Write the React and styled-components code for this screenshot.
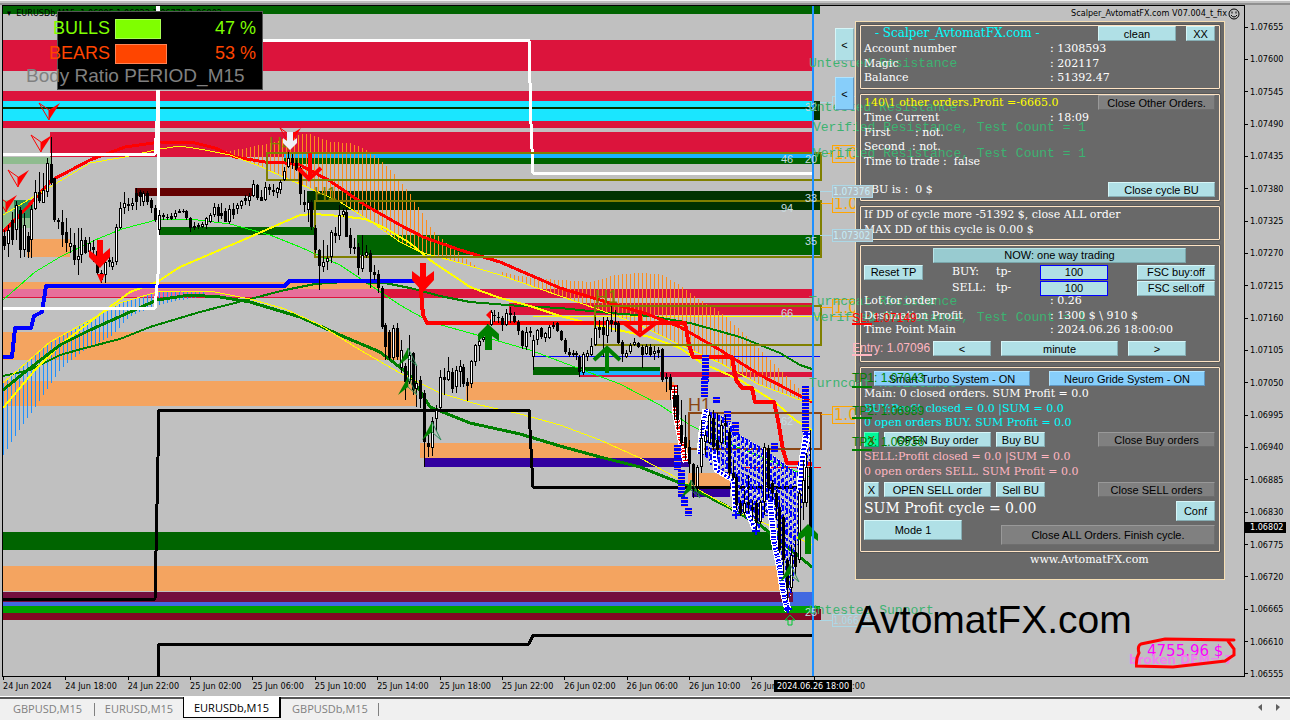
import React from "react";
import styled, { createGlobalStyle, css } from "styled-components";

const SANS = `"Liberation Sans", Arial, sans-serif`;
const SERIF = `"DejaVu Serif", serif`;
const MONO = `"Liberation Mono", monospace`;
const AXIS = `"DejaVu Sans Condensed", "DejaVu Sans", sans-serif`;

const GlobalStyle = createGlobalStyle`
  * { box-sizing: border-box; }
  body { margin: 0; background: #c0c0c0; font-family: ${SANS}; color: #000; }
  button, input { font: inherit; margin: 0; }
`;

/* ---------- window frame ---------- */

const Page = styled.div`
  display: flex;
  flex-direction: column;
  min-height: 100vh;
  overflow: hidden;
`;

const TopStrip = styled.div`
  height: 5px;
  background: #c0c0c0;
  border-top: 1px solid #f0f0f0;
  border-bottom: 2px solid #909090;
`;

const Workspace = styled.main`
  display: flex;
  flex: 1;
  padding-left: 2px;
`;

const Plot = styled.section`
  position: relative;
  isolation: isolate;
  flex: 1;
  min-width: 0;
  border: 1px solid #000;
  display: flex;
  flex-direction: column;
`;

/* layers: -2 the chart, -1 panel background and zone notes, 0 panel controls and trade levels */
const Drawing = styled.svg`
  position: absolute;
  z-index: ${(p) => p.$layer};
  top: 0;
  left: 0;
  width: 1242px;
  height: 670px;
  pointer-events: none;
`;

const ChartHeader = styled.header`
  position: relative;
  display: flex;
  justify-content: space-between;
  align-items: center;
  height: 15px;
  padding: 0 4px;
  font: 9px/15px ${AXIS};
`;

const Expert = styled.span`
  display: flex;
  align-items: center;
  gap: 1px;
`;

const RatioBox = styled.aside`
  position: absolute;
  top: 5px;
  left: 54px;
  width: 206px;
  height: 79px;
  background: #000;
  border: 1px solid #555;
  font-size: 18px;
  line-height: 25px;
  padding-top: 4px;
`;

const RatioRow = styled.div`
  display: flex;
  align-items: center;
  height: 25px;
  margin-left: -12px;
  color: ${(p) => p.$color};
`;

const RatioName = styled.span`
  width: 64px;
  text-align: right;
`;

const RatioBar = styled.span`
  height: 20px;
  margin-left: 5px;
  background: ${(p) => p.$color};
  border: 1px solid #ffffff55;
  width: ${(p) => p.$width}px;
`;

const RatioValue = styled.span`
  flex: 1;
  padding-right: 6px;
  text-align: right;
`;

const RatioCaption = styled.div`
  margin-left: -32px;
  color: #808080;
  font-size: 19px;
  line-height: 20px;
  white-space: nowrap;
`;

/* ---------- expert panel ---------- */

const Side = styled.div`
  display: flex;
  flex-direction: column;
  align-self: flex-end;
  width: 390px;
  margin-right: 19px;
`;

const PanelRow = styled.div`
  display: flex;
`;

const SideTabs = styled.div`
  display: flex;
  flex: none;
  flex-direction: column;
  gap: 16px;
  padding-top: 7px;
  width: 20px;
`;

const Panel = styled.section`
  position: relative;
  flex: 1;
  min-width: 0;
  height: 559px;
  padding: 3px 4px 0 4px;
  border: 1px solid #f5deb3;
  color: #fff;
  font: 11px/14px ${SERIF};
  &::before {
    content: "";
    position: absolute;
    z-index: -1;
    inset: 0;
    background: #696969;
  }
`;

const Group = styled.div`
  margin-bottom: 5px;
  padding: ${(p) => p.$pad || "0"} 4px 0 3px;
  height: ${(p) => p.$h}px;
  border: 1px solid #ffe4c4;
  border-radius: 1px;
  box-shadow: 0 0 0 1px #585858;
`;

const Bar = styled.div`
  display: flex;
  align-items: center;
  height: ${(p) => p.$h || 15}px;
  gap: ${(p) => p.$gap || 0}px;
  margin-top: ${(p) => p.$top || 0}px;
  padding-left: ${(p) => p.$left || 0}px;
`;

const Title = styled.h1`
  flex: 1;
  margin: 0;
  padding-left: 11px;
  color: #00ffff;
  font-size: 12px;
  font-weight: normal;
  line-height: 15px;
`;

const Lines = styled.div`
  margin-top: ${(p) => p.$top || 0}px;
  color: ${(p) => p.$color || "#fff"};
  white-space: pre;
  & > * { height: 15px; line-height: 15px; }
  & > :nth-child(even) { height: 14px; }
`;

const Line = styled.div`
  display: grid;
  grid-template-columns: 186px 1fr;
  color: ${(p) => p.$color || "inherit"};
`;

const Free = styled.div`
  color: ${(p) => p.$color || "inherit"};
`;

const Grow = styled.span`
  flex: 1;
  white-space: pre;
  color: ${(p) => p.$color || "inherit"};
`;

const tones = {
  powder: css`background: #b0e0e6; border-color: #d6f6f8 #86aeb4 #86aeb4 #d6f6f8;`,
  sky: css`background: #87cefa; border-color: #b0e4ff #5f96c0 #5f96c0 #b0e4ff;`,
  teal: css`background: #98cbd0; border-color: #b8e4e8 #7aa6aa #7aa6aa #b8e4e8;`,
  grey: css`background: #808080; border-color: #999 #6e6e6e #6e6e6e #999;`,
  green: css`background: #00fa9a; border-color: #60ffc0 #00b070 #00b070 #60ffc0; color: #a03000;`,
};

const Button = styled.button`
  flex: none;
  width: ${(p) => p.$w}px;
  height: ${(p) => p.$h || 15}px;
  padding: 0;
  border: 1px solid;
  color: #000;
  font: 11px/12px ${SANS};
  white-space: nowrap;
  ${(p) => tones[p.$tone || "powder"]}
`;

const TakeProfit = styled.div`
  display: grid;
  grid-template-columns: 88px 44px 44px 97px 78px;
  grid-auto-rows: 16px;
  align-items: center;
`;

const TpInput = styled.input`
  width: 68px;
  height: 15px;
  padding: 0;
  border: 1px solid #0000ff;
  background: #b0e0e6;
  text-align: center;
  font: 11px/13px ${SANS};
`;

const Foot = styled.div`
  display: flex;
  justify-content: space-between;
`;

const FootCol = styled.div`
  display: flex;
  flex-direction: column;
  width: ${(p) => p.$w}px;
  align-items: ${(p) => p.$align};
  gap: 4px;
  padding-top: 4px;
`;

const Sum = styled.strong`
  font-size: 14px;
  font-weight: normal;
  line-height: 15px;
  white-space: nowrap;
`;

const Site = styled.a`
  display: block;
  margin-top: -4px;
  padding-left: 170px;
  color: #fff;
  text-decoration: none;
`;

const Watermark = styled.div`
  margin-top: 16px;
  padding-left: 20px;
  font-size: 39px;
  line-height: 48px;
`;

const Profit = styled.div`
  position: relative;
  align-self: flex-end;
  width: 96px;
  height: 30px;
  color: #ff00ff;
  font: 15px/14px "DejaVu Sans", sans-serif;
  padding-left: 18px;
  white-space: nowrap;
`;

const Broken = styled.div`
  margin: -6px 0 0 -18px;
  color: #ee82ee;
  font: bold 12px/16px "DejaVu Sans", sans-serif;
`;

const Lasso = styled.svg`
  position: absolute;
  left: 6px;
  top: -8px;
  width: 102px;
  height: 36px;
`;

/* ---------- axes ---------- */

const PriceAxis = styled.div`
  position: relative;
  display: flex;
  flex-direction: column;
  justify-content: space-between;
  width: 45px;
  padding: 15px 0 0;
  margin-bottom: -4px;
  font: 9px/14px ${AXIS};
`;

const Price = styled.span`
  display: flex;
  align-items: center;
  gap: 2px;
  &::before { content: ""; width: 3px; height: 1px; background: #000; }
`;

const PriceNow = styled.span`
  position: absolute;
  top: 517px;
  left: 0;
  width: 41px;
  padding-left: 5px;
  background: #000;
  color: #fff;
  line-height: 11px;
`;

const TimeAxis = styled.div`
  position: relative;
  display: flex;
  width: 873px;
  height: 20px;
  margin-left: 2px;
  font: 9px/18px ${AXIS};
`;

const Time = styled.span`
  flex: 1;
  white-space: nowrap;
  &::before { content: ""; float: left; width: 1px; height: 3px; margin-right: -1px; margin-left: 1px; background: #000; }
`;

const TimeNow = styled.span`
  position: absolute;
  left: 772px;
  top: 3px;
  width: 78px;
  background: #000;
  color: #fff;
  text-align: center;
  line-height: 12px;
`;

const TabBar = styled.nav`
  display: flex;
  align-items: flex-start;
  height: 23px;
  background: #f0f0f0;
  border-top: 2px solid #555;
  box-shadow: 0 -1px 0 #fff;
  color: #808080;
  font: 11px/19px "Open Sans", "Noto Sans", sans-serif;
`;

const Tab = styled.a`
  width: ${(p) => p.$w}px;
  text-align: center;
  color: inherit;
  text-decoration: none;
  ${(p) => p.$rule && css`
    background: linear-gradient(#808080, #808080) right 4px / 1px 13px no-repeat;
  `}
  ${(p) => p.$active && css`
    margin-top: -2px;
    padding-top: 1px;
    background: #fff;
    color: #000;
    border: solid #000;
    border-width: 0 2px 1px 1px;
  `}
`;

const Scroll = styled.svg`
  margin: 4px 7px 0 auto;
`;

/* ---------- chart data ---------- */

/* x, high, body top, body bottom, low, rising */
const candles = [
  [4,230,236,246,250,0],[8,225,230,244,257,1],[12,212,220,240,245,0],[16,201,205,230,240,1],[20,207,210,250,258,0],
  [24,213,225,250,257,1],[28,232,236,252,258,0],[31,205,209,240,258,1],[35,180,192,209,210,1],[39,172,192,201,203,0],
  [43,173,190,203,203,1],[47,158,163,192,197,1],[51,137,164,183,185,0],[54,178,178,220,222,0],[58,218,220,222,229,0],
  [62,210,222,235,247,0],[66,218,232,243,252,0],[70,228,243,247,253,1],[74,233,245,260,265,0],[78,228,256,260,275,1],
  [81,228,240,255,263,1],[85,237,240,253,254,0],[89,237,243,252,253,1],[93,240,247,250,262,0],[97,248,251,273,275,0],
  [101,270,273,280,283,0],[105,255,262,275,283,1],[109,250,260,262,267,0],[112,257,262,267,270,1],[116,224,227,262,265,1],
  [120,202,208,228,229,1],[124,192,203,208,214,1],[128,198,204,206,211,0],[132,198,203,206,210,1],[136,188,193,202,210,0],
  [140,190,192,197,206,0],[143,191,193,202,206,1],[147,191,193,202,205,0],[151,198,200,208,213,0],[155,205,208,220,222,0],
  [159,210,215,230,235,1],[163,213,215,217,220,0],[167,214,217,218,220,1],[171,213,216,219,220,0],[175,210,213,217,219,1],
  [179,209,211,213,213,1],[183,209,211,212,213,0],[186,210,211,218,220,0],[190,217,218,228,232,0],[194,222,226,228,230,1],
  [198,223,225,227,229,0],[202,222,224,227,228,1],[206,217,218,225,229,1],[210,213,215,222,223,1],[214,203,207,215,217,1],
  [218,204,207,216,222,0],[221,203,213,216,219,0],[225,208,211,222,222,0],[229,205,209,222,224,1],[233,203,209,215,219,0],
  [237,203,205,209,214,1],[241,200,201,206,209,1],[245,195,198,201,205,0],[249,193,196,201,206,1],[253,180,184,196,197,1],
  [257,184,185,198,200,0],[261,190,197,201,201,0],[265,182,187,200,201,1],[269,184,187,190,195,0],[273,184,190,192,196,0],
  [277,187,188,193,198,1],[280,180,182,190,194,1],[284,167,171,180,181,1],[288,152,158,167,168,1],[292,154,158,163,169,0],
  [296,160,163,170,171,0],[300,166,168,194,205,0],[304,190,202,205,212,0],[308,200,202,210,222,1],[311,200,202,227,230,0],
  [315,225,228,250,253,0],[319,249,250,266,290,0],[323,240,262,267,272,1],[327,245,258,262,270,1],[331,230,232,257,263,1],
  [335,227,233,236,243,0],[339,205,215,236,240,1],[343,208,211,215,217,1],[346,208,212,237,237,0],[350,228,235,248,254,0],
  [354,238,247,249,254,1],[358,243,247,268,275,0],[362,235,255,269,272,1],[366,245,252,256,258,1],[370,250,253,272,288,0],
  [374,265,272,275,280,0],[378,270,274,288,293,0],[382,286,288,327,329,0],[385,323,325,347,360,0],[389,330,332,358,360,0],
  [393,325,328,358,360,1],[397,323,328,357,360,0],[401,340,350,368,373,1],[405,363,366,382,400,0],[409,335,355,382,384,1],
  [413,352,353,390,395,0],[416,365,383,389,407,1],[420,376,380,399,408,0],[424,390,393,442,467,0],[428,435,443,447,457,0],
  [432,417,421,448,456,1],[436,405,410,419,431,1],[440,370,377,408,409,1],[444,368,377,380,395,0],[448,357,371,380,381,1],
  [452,368,372,389,393,0],[456,366,370,387,393,1],[460,360,366,372,387,1],[463,364,367,384,387,0],[467,378,382,386,401,0],
  [471,360,361,384,388,1],[475,344,345,362,366,1],[479,338,341,346,361,1],[483,333,337,340,342,1],[487,324,326,333,341,1],
  [491,310,312,325,326,1],[494,310,315,316,322,0],[498,312,317,318,323,0],[502,316,318,325,331,0],[506,309,313,325,326,1],
  [510,307,313,315,323,0],[514,312,316,322,323,0],[518,320,322,331,335,0],[522,330,331,346,349,0],[526,327,332,347,350,1],
  [530,327,331,333,337,0],[533,335,340,357,370,1],[537,329,330,340,345,1],[541,327,328,337,339,0],[545,332,333,338,342,1],
  [549,325,327,338,339,1],[553,322,325,327,329,0],[557,322,323,331,332,0],[561,330,331,340,341,0],[565,338,340,352,354,0],
  [569,348,352,355,357,0],[573,350,353,355,357,0],[576,351,353,355,360,0],[579,355,357,372,377,0],[583,352,354,373,375,1],
  [587,350,353,357,361,1],[591,338,346,355,356,1],[595,317,328,345,346,1],[599,320,327,330,338,0],[603,317,327,335,357,0],
  [607,317,320,336,343,1],[611,306,320,324,332,0],[615,310,322,325,332,0],[618,321,323,343,344,0],[622,340,342,354,362,0],
  [626,350,353,357,358,1],[630,343,345,352,354,1],[634,338,342,345,346,1],[638,342,343,347,348,0],[642,345,347,355,368,0],
  [646,344,346,354,355,1],[650,344,347,355,357,0],[654,346,351,354,360,1],[658,347,350,353,358,0],[662,348,349,380,382,0],
  [666,373,377,379,392,0],[670,374,377,390,400,0],[674,386,395,407,420,0],[677,385,395,420,430,0],[681,400,425,443,446,0],
  [685,415,437,448,460,0],[689,440,447,464,473,0],[693,463,464,485,498,0],[697,465,467,487,497,1],[701,420,438,467,473,1],
  [705,430,435,442,455,1],[709,412,415,443,444,1],[713,410,418,447,450,0],[717,413,440,450,455,0],[721,420,425,443,445,1],
  [725,415,423,426,445,0],[729,428,432,473,476,0],[733,460,473,478,480,0],[736,474,477,505,510,0],[740,500,503,513,516,0],
  [744,490,503,513,515,1],[748,475,502,505,513,0],[752,500,507,510,520,0],[756,500,503,523,530,0],[760,500,502,522,524,1],
  [764,443,447,502,515,1],[768,445,448,487,498,0],[772,480,483,493,500,0],[776,490,493,507,520,0],[779,500,507,550,553,0],
  [783,515,517,560,575,0],[787,558,560,588,600,0],[791,545,555,588,592,1],[795,540,552,567,575,0],[799,490,493,560,563,1],
  [803,460,480,503,520,1],[806,453,467,503,507,1],[810,430,467,528,533,0],
];

/* x, y, width, height, fill */
const bands = [
  [3,6,817,8,"#006400"],[3,40,810,31,"#dc143c"],[3,91,810,37,"#dc143c"],[3,101,810,20,"#1ae6ff"],[3,107,810,2,"#003200"],
  [813,101,7,19,"#003200"],[50,132,763,25,"#dc143c"],[3,157,48,7,"#8fbc8f"],[284,153,529,5,"#1ab2ff"],[284,158,529,6,"#006400"],
  [813,153,7,11,"#006400"],[3,200,30,28,"#8fbc8f"],[14,200,19,18,"#2e8b57"],[135,188,117,8,"#640000"],[159,227,156,8,"#006400"],
  [307,191,513,19,"#003200"],[357,235,463,20,"#006400"],[27,239,43,18,"#f4a460"],[3,282,377,7,"#f4a460"],[3,289,379,8,"#e76f9b"],
  [382,289,431,8,"#dc143c"],[3,297,810,1,"#dc143c"],[3,332,397,28,"#f4a460"],[3,381,413,25,"#f4a460"],[466,382,208,18,"#f4a460"],
  [420,443,268,15,"#f4a460"],[424,458,265,9,"#3200a0"],[509,303,304,12,"#dc143c"],[533,316,287,1,"#ffff00"],
  [580,372,233,5,"#dc143c"],[533,367,127,8,"#006400"],[580,371,80,4,"#1ab2ff"],[688,473,42,14,"#f4a460"],[692,489,38,8,"#3200a0"],
  [3,532,777,18,"#006400"],[3,566,780,25,"#f4a460"],[3,592,790,10,"#730e3e"],[793,592,20,10,"#4169e1"],[3,602,810,4,"#4169e1"],
  [3,606,817,7,"#00a000"],[3,613,817,7,"#820a23"],[813,609,8,11,"#820a23"],
];

const yellowTop = [[3,215],[50,187],[90,163],[125,157],[160,149],[180,146],[205,150],[230,155],[262,167],[285,178],[300,184],[340,202],[370,221],[400,242],[420,252],[460,263],[500,275],[560,296],[600,310],[640,325],[680,345],[720,363],[760,385],[800,400],[812,400]];
const yellowLow = [[3,383],[50,342],[90,320],[120,303],[157,292],[180,291],[215,292],[250,299],[285,309],[320,325],[360,350],[400,373],[440,393],[480,405],[520,414],[560,425],[600,440],[640,458],[690,485],[740,513],[785,532],[812,545]];
const humpOne = [[222,152],[240,149],[270,143],[300,134],[310,134],[330,142],[350,143],[365,149],[378,158],[390,170],[400,181],[412,197],[422,213],[432,230],[445,242],[460,254],[475,266]];
const humpTwo = [[500,272],[530,278],[560,280],[590,282],[615,275],[640,273],[660,274],[680,285],[700,300],[720,312],[740,330],[760,350],[780,370],[800,390]];
const blueTail = [[3,455],[20,428],[35,407],[60,369],[85,349],[110,337],[130,316],[157,305],[180,300],[205,296]];
const gridTop = [[701,420],[706,410],[722,416],[740,435],[760,447],[775,457],[795,472],[800,460],[810,440]];
const gridBottom = [[701,452],[715,470],[728,475],[736,512],[745,516],[757,533],[764,516],[772,515],[780,560],[787,606],[792,590],[797,545],[802,500],[810,455]];

const lines = [
  { c: "#00ff00", w: 1, p: [[3,300],[35,272],[60,257],[95,240],[122,229],[160,219],[190,219],[230,224],[270,235],[300,247],[340,265],[370,285],[400,305],[430,322],[470,333],[530,350],[575,367],[620,384],[660,405],[690,425],[720,440],[745,450],[812,478]] },
  { c: "#008000", w: 2, p: [[3,376],[30,370],[60,355],[85,348],[120,339],[150,327],[200,312],[250,299],[285,290],[315,284],[345,282],[385,283],[410,288],[440,296],[470,302],[520,306],[560,308],[610,313],[650,316],[690,323],[740,337],[780,353],[800,365],[812,369]] },
  { c: "#ffff00", w: 2, p: [[3,408],[35,370],[60,345],[95,318],[130,292],[157,282],[180,267],[215,252],[250,237],[275,226],[300,215],[315,214],[340,216],[365,219],[385,228],[410,243],[430,260],[470,287],[500,298],[530,306],[560,316],[600,326],[650,337],[680,348],[700,362],[740,380],[775,402],[795,420],[812,430]] },
  { c: "#008000", w: 3, p: [[3,390],[25,372],[60,345],[90,330],[130,312],[157,300],[190,295],[220,297],[250,302],[300,317],[340,335],[380,352],[410,375],[430,407],[470,423],[520,434],[560,446],[600,457],[640,467],[690,487],[730,508],[760,525],[785,545],[812,567]] },
  { c: "#ff0000", w: 3, p: [[3,232],[20,215],[52,180],[90,160],[125,147],[160,142],[195,143],[215,148],[235,157],[265,162],[285,163],[300,165],[330,181],[365,205],[400,225],[423,237],[460,250],[500,262],[560,288],[600,300],[647,314],[680,327],[720,350],[760,375],[812,402]] },
  { c: "#ffff00", w: 1, p: yellowTop },
  { c: "#ffff00", w: 1, p: yellowLow },
  { c: "#0000ff", w: 4, p: [[3,357],[12,357],[15,328],[31,328],[34,316],[42,312],[46,286],[285,286],[289,281],[415,281]] },
  { c: "#ff0000", w: 4, p: [[420,281],[423,315],[427,323],[685,323],[689,345],[693,357],[732,357],[736,380],[742,388],[752,388],[755,402],[774,402],[778,420],[783,450],[787,463],[812,464]] },
  { c: "#ffffff", w: 3, p: [[3,154],[155,154],[157,122],[158,6]] },
  { c: "#ffffff", w: 3, p: [[3,308],[155,308],[158,274],[158,6]] },
  { c: "#ffffff", w: 3, p: [[158,40],[529,40],[531,124],[533,173],[814,173]] },
  { c: "#000000", w: 3, p: [[3,599],[155,599],[159,410],[529,410],[533,487],[814,487]] },
  { c: "#000000", w: 3, p: [[158,676],[159,644],[529,644],[533,635],[814,635]] },
];

const at = (curve, x) => {
  for (let i = 1; i < curve.length; i++) {
    const [x0, y0] = curve[i - 1];
    const [x1, y1] = curve[i];
    if (x <= x1) return Math.round(y0 + ((y1 - y0) * (x - x0)) / (x1 - x0));
  }
  return curve[curve.length - 1][1];
};

const between = (top, bottom, from, to, step = 4) => {
  let d = "";
  for (let x = from; x <= to; x += step) d += `M${x} ${at(top, x)}V${at(bottom, x)}`;
  return d;
};

/* one-pixel vertical bars filling the space between two curves */
function Histogram({ top, bottom, from, to, color }) {
  const bars = [];
  for (let x = from; x <= to; x += 4) {
    const y = at(top, x);
    bars.push(<rect key={x} x={x} y={y} width="1" height={Math.max(0, at(bottom, x) - y)} />);
  }
  return <g fill={color}>{bars}</g>;
}

const pts = (p) => p.map((q) => q.join(",")).join(" ");

const barStacks = [[705,355,383],[704,378,397],[716,397,404],[727,411,422],[735,422,436],[677,445,470],[681,470,497],[684,497,507],[688,508,516],[774,443,452],[805,386,432]];

const boxes = [
  [267,153,554,27,"#808000"],[315,201,506,56,"#808000"],[595,306,226,39,"#808000"],[689,413,132,36,"#8b4513"],
];

const orangeTags = [145, 195, 299, 406];

const counts = [
  ["32",805,111],["46",781,163],["20",805,163],["33",805,202],["94",781,212],["35",805,245],["66",781,317],["62",781,425],["25",805,616],
];

function Candle({ d: [x, hi, top, bottom, lo, up] }) {
  return (
    <g>
      <rect x={x} y={hi} width="1" height={lo - hi} />
      <rect x={x - 1} y={top} width="3" height={Math.max(1, bottom - top)} />
      {up && bottom - top > 2 ? <rect x={x} y={top + 1} width="1" height={bottom - top - 2} fill="#fff" /> : null}
    </g>
  );
}

const Dart = ({ x, y }) => (
  <g transform={`translate(${x} ${y})`}>
    <path d="M-10 -9L0 -2V8Z" fill="none" stroke="#f00" />
    <path d="M11 -9L0 -2V8Z" fill="#f00" />
  </g>
);

const UpDart = ({ x, y }) => (
  <g transform={`translate(${x} ${y})`}>
    <path d="M10 10L1 2V-8Z" fill="none" stroke="#2e8b57" />
    <path d="M-9 10L1 2V-8Z" fill="#008000" />
  </g>
);

const Chart = () => (
  <Drawing $layer={-2} viewBox="3 6 1242 670" aria-label="EURUSDb M15 price chart" shapeRendering="crispEdges">
    {bands.map(([x, y, w, h, f], i) => <rect key={i} x={x} y={y} width={w} height={h} fill={f} />)}
    <path d="M820 6v8h-6l-5 -8z" fill="#006400" />
    <Histogram top={humpOne} bottom={yellowTop} from={226} to={474} color="#ff8c1a" />
    <Histogram top={humpTwo} bottom={yellowTop} from={502} to={806} color="#ff8c1a" />
    <Histogram top={yellowLow} bottom={blueTail} from={3} to={205} color="#1e90ff" />
    <rect x="533" y="356" width="287" height="1" fill="#0000ff" />
    <g fill="none" strokeLinejoin="round">
      {lines.map((l, i) => <polyline key={i} points={pts(l.p)} stroke={l.c} strokeWidth={l.w} />)}
    </g>
    <rect x="742" y="467" width="79" height="1" fill="#f00" />
    {boxes.map(([x, y, w, h, c], i) => <rect key={i} x={x} y={y} width={w} height={h} fill="none" stroke={c} strokeWidth="2" />)}
    <g fontFamily={SANS} fontSize="18">
      <text x="269" y="150" fill="#808000">H4</text>
      <text x="314" y="200" fill="#808000">H1</text>
      <text x="595" y="303" fill="#808000">H1</text>
      <text x="688" y="411" fill="#8b4513">H1</text>
    </g>

    {/* pending grid orders and their trails */}
    <path d={between(gridTop, gridBottom, 702, 810, 4)} stroke="#fff" strokeWidth="2" strokeDasharray="2 5 1 4" />
    <path d={between(gridTop, gridBottom, 703, 809, 4)} stroke="#00f" strokeWidth="2" strokeDasharray="6 3 3 3 4 2" />
    <path d={between(gridTop, gridBottom, 705, 809, 4)} stroke="#00f" strokeWidth="1" strokeDasharray="2 3 4 3" />
    <g fill="none">
      <polyline points="674,385 676,415 681,440 686,462" stroke="#fff" strokeWidth="7" />
      <polyline points="674,385 676,415 681,440 686,462" stroke="#f00" strokeWidth="5" strokeDasharray="2 2 1 1" />
      <polyline points="700,454 702,432 706,409" stroke="#fff" strokeWidth="7" />
      <polyline points="700,454 702,432 706,409" stroke="#00f" strokeWidth="4" strokeDasharray="2 1 1 2" />
      <polyline points="714,452 716,470 726,476 733,480 735,512" stroke="#fff" strokeWidth="5" />
      <polyline points="714,452 716,470 726,476 733,480 735,512" stroke="#00f" strokeWidth="3" strokeDasharray="2 2" />
      <polyline points="748,512 753,525 756,531" stroke="#fff" strokeWidth="6" />
      <polyline points="748,512 753,525 756,531" stroke="#00f" strokeWidth="4" strokeDasharray="2 2" />
      <polyline points="770,500 774,540 780,570 783,590 788,611" stroke="#fff" strokeWidth="7" />
      <polyline points="770,500 774,540 780,570 783,590 788,611" stroke="#00f" strokeWidth="5" strokeDasharray="2 1 1 2" />
      <polyline points="800,490 803,455 807,432" stroke="#fff" strokeWidth="7" />
      <polyline points="800,490 803,455 807,432" stroke="#00f" strokeWidth="5" strokeDasharray="2 2" />
    </g>
    <path d="M732 515h8m-4 -4v8M752 531h8m-4 -4v8M784 609h8m-4 -4v8M803 434h8m-4 -4v8" stroke="#00f" strokeWidth="2" />
    {barStacks.map(([x, a, b], i) => (
      <g key={i} strokeWidth="7">
        <path d={`M${x} ${a}V${b}`} stroke="#f4a460" strokeDasharray="0 2 1 4" />
        <path d={`M${x} ${a}V${b}`} stroke="#00f" strokeDasharray="2 1 3 1" />
      </g>
    ))}

    {candles.map((d) => <Candle key={d[0]} d={d} />)}

    {/* signal arrows */}
    <g shapeRendering="auto">
      <Dart x={49} y={112} />
      <Dart x={41} y={144} />
      <Dart x={18} y={179} />
      <Dart x={6} y={204} />
      <Dart x={290} y={137} />
      <UpDart x={407} y={356} />
      <UpDart x={407} y={385} />
      <UpDart x={431} y={430} />
      <UpDart x={690} y={488} />
      <UpDart x={789} y={572} />
      <path d="M97 240h6v14l7 -6v9l-10 11l-11 -11v-7l8 6zM97 274h8l-4 9z" fill="#f00" />
      <path d="M287 132h6v9l4 -3v5l-7 7l-7 -7v-5l4 3z" fill="#f0f0f8" />
      <path d="M420 263h6v14l8 -6v9l-11 12l-11 -12v-9l8 6z" fill="#f00" />
      <path d="M310 153v26M298 168l11 11l12 -11M640 310v22M624 323l16 12l16 -12" fill="none" stroke="#f00" strokeWidth="4" />
      <path d="M491 310l-5 5l5 5z" fill="#f00" />
      <path d="M485 350v-14l-7 5v-7l10 -10l11 10v7l-7 -5v14z" fill="#008000" />
      <path d="M607 373v-25M594 360l13 -12l13 12" fill="none" stroke="#008000" strokeWidth="4" />
      <path d="M805 554v-18l-7 5v-7l10 -10l10 10v7l-7 -5v18z" fill="#008000" />
      <path d="M788 625v-5h-3l5 -5l5 5h-3v5z" fill="none" stroke="#00c832" />
    </g>

    <g fill="none" stroke="#ffa500">
      {orangeTags.map((y) => <path key={y} d={`M821 ${y + 8}h11M832 ${y}h40v17h-40z`} />)}
    </g>
    <g fontFamily={`"DejaVu Sans", sans-serif`} fontSize="15" fill="#ffa500">
      {orangeTags.map((y) => <text key={y} x="834" y={y + 14}>1.0</text>)}
    </g>
    <path d="M820 102h12M832 96h40v12h-40z" fill="none" stroke="#add8e6" />
    <path d="M813 6V676" stroke="#1e90ff" strokeWidth="2" />
    <g fontFamily={SANS} fontSize="11" fill="#c8dce0">
      {counts.map(([t, x, y]) => <text key={t} x={x} y={y}>{t}</text>)}
    </g>
  </Drawing>
);

const zoneNotes = [
  ["Untested Resistance", 809, 67],
  ["Untested Resistance", 809, 111],
  ["Verified Resistance, Test Count = 1", 813, 131],
  ["Verified Resistance, Test Count = 1", 813, 157],
  ["Turncoat Resistance", 809, 305],
  ["Verified Resistance, Test Count = 1", 813, 321],
  ["Turncoat Resistance", 809, 387],
  ["Untested Support", 809, 614],
];

const levels = [
  ["SL: 1.07149", 852, 322, "#ff0000", 324],
  ["Entry: 1.07096", 852, 352, "#ffb6c1", 355],
  ["TP1: 1.07043", 852, 382, "#008000", 387],
  ["TP2: 1.06989", 852, 415, "#008000", 418],
  ["TP3: 1.06936", 852, 446, "#008000", 450],
];

const ZoneNotes = () => (
  <Drawing $layer={-1} viewBox="3 6 1242 670">
    <g fontFamily={MONO} fontSize="13" fill="#3cb371">
      {zoneNotes.map(([t, x, y]) => <text key={y} x={x} y={y}>{t}</text>)}
    </g>
    <path d="M820 191h12M820 235h12M820 620h12" stroke="#add8e6" shapeRendering="crispEdges" />
    <rect x="832" y="614" width="40" height="12" fill="none" stroke="#add8e6" shapeRendering="crispEdges" />
    <text x="833" y="624" fontFamily={AXIS} fontSize="10" fill="#add8e6">1.06645</text>
  </Drawing>
);

const Levels = () => (
  <Drawing $layer={0} viewBox="3 6 1242 670">
    <g fill="#b4bcc0" stroke="#add8e6" shapeRendering="crispEdges">
      <rect x="832" y="185" width="40" height="12" />
      <rect x="832" y="229" width="40" height="12" />
    </g>
    <g fontFamily={AXIS} fontSize="10" fill="#c4ecf8">
      <text x="833" y="195">1.07376</text>
      <text x="833" y="239">1.07302</text>
    </g>
    <g fontFamily={SANS} fontSize="12">
      {levels.map(([t, x, y, c, u]) => (
        <g key={t}>
          <text x={x} y={y} fill={c}>{t}</text>
          <path d={`M852 ${u}H872`} stroke={c} strokeWidth="2" shapeRendering="crispEdges" />
        </g>
      ))}
    </g>
  </Drawing>
);

/* ---------- page ---------- */

const OrderButtons = ({ side, tone, top }) => (
  <Bar $gap={5} $top={top}>
    <Button $w={15} $tone={tone}>X</Button>
    <Button $w={107}>{side === "Buy" ? "OPEN Buy order" : "OPEN SELL order"}</Button>
    <Button $w={49}>{side === "Buy" ? "Buy BU" : "Sell BU"}</Button>
    <Grow />
    <Button $w={117} $tone="grey">{side === "Buy" ? "Close Buy orders" : "Close SELL orders"}</Button>
  </Bar>
);

const ExpertPanel = () => (
  <Panel>
    <Group $h={64}>
      <Bar>
        <Title>- Scalper_AvtomatFX.com -</Title>
        <Bar $gap={10}>
          <Button $w={78}>clean</Button>
          <Button $w={29}>XX</Button>
        </Bar>
      </Bar>
      <Lines>
        <Line><span>Account number</span><span>: 1308593</span></Line>
        <Line><span>Magic</span><span>: 202117</span></Line>
        <Line><span>Balance</span><span>: 51392.47</span></Line>
      </Lines>
    </Group>

    <Group $h={107}>
      <Bar>
        <Grow $color="#ffff00">140\1 other orders.Profit =-6665.0</Grow>
        <Button $w={117} $tone="grey">Close Other Orders.</Button>
      </Bar>
      <Lines>
        <Line><span>Time Current</span><span>: 18:09</span></Line>
        <Free>{"First       : not."}</Free>
        <Free>{"Second  : not."}</Free>
        <Free>{"Time to trade :  false"}</Free>
      </Lines>
      <Bar $top={14}>
        <Grow>{"  BU is :  0 $"}</Grow>
        <Button $w={107}>Close cycle BU</Button>
      </Bar>
    </Group>

    <Group $h={34} $pad="0">
      <Lines>
        <Free>If DD of cycle more -51392 $, close ALL order</Free>
        <Free>MAX DD of this cycle is 0.00 $</Free>
      </Lines>
    </Group>

    <Group $h={117}>
      <Bar $h={18} $left={69}>
        <Button $w={253} $tone="teal">NOW: one way trading</Button>
      </Bar>
      <TakeProfit>
        <Button $w={59}>Reset TP</Button>
        <span>BUY:</span>
        <label htmlFor="tp-buy">tp-</label>
        <TpInput id="tp-buy" defaultValue="100" />
        <Button $w={78}>FSC buy:off</Button>
        <span />
        <span>SELL:</span>
        <label htmlFor="tp-sell">tp-</label>
        <TpInput id="tp-sell" defaultValue="100" />
        <Button $w={78}>FSC sell:off</Button>
      </TakeProfit>
      <Lines $top={-3}>
        <Line><span>Lot for order</span><span>: 0.26</span></Line>
        <Line><span>Destination Profit</span><span>: 1300 $ \ 910 $</span></Line>
        <Line><span>Time Point Main</span><span>: 2024.06.26 18:00:00</span></Line>
      </Lines>
      <Bar $gap={10} $top={4} $left={69}>
        <Button $w={58}>&lt;</Button>
        <Button $w={117}>minute</Button>
        <Button $w={58}>&gt;</Button>
      </Bar>
    </Group>

    <Group $h={185} $pad="3px">
      <Bar $gap={19} $left={10}>
        <Button $w={156} $tone="sky">Smart Turbo System - ON</Button>
        <Button $w={156} $tone="sky">Neuro Gride System - ON</Button>
      </Bar>
      <Lines>
        <Free>Main: 0 closed orders. SUM Profit = 0.0</Free>
        <Free $color="#00ffff">BUY:Profit closed = 0.0 |SUM = 0.0</Free>
        <Free $color="#00ffff">0 open orders BUY. SUM Profit = 0.0</Free>
      </Lines>
      <OrderButtons side="Buy" tone="green" top={2} />
      <Lines $top={2} $color="#ffb6c1">
        <Free>SELL:Profit closed = 0.0 |SUM = 0.0</Free>
        <Free>0 open orders SELL. SUM Profit = 0.0</Free>
      </Lines>
      <OrderButtons side="Sell" top={4} />
      <Foot>
        <FootCol $w={98} $align="flex-start">
          <Sum>SUM Profit cycle = 0.00</Sum>
          <Button $w={98} $h={20}>Mode 1</Button>
        </FootCol>
        <FootCol $w={214} $align="flex-end">
          <Button $w={39} $h={20}>Conf</Button>
          <Button $w={214} $h={20} $tone="grey">Close ALL Orders. Finish cycle.</Button>
        </FootCol>
      </Foot>
    </Group>
    <Site href="#site">www.AvtomatFX.com</Site>
  </Panel>
);

const prices = Array.from({ length: 21 }, (_, i) => ((107655 - i * 55) / 100000).toFixed(5));

const times = [
  "24 Jun 2024", "24 Jun 18:00", "24 Jun 22:00", "25 Jun 02:00", "25 Jun 06:00", "25 Jun 10:00", "25 Jun 14:00",
  "25 Jun 18:00", "25 Jun 22:00", "26 Jun 02:00", "26 Jun 06:00", "26 Jun 10:00", "26 Jun 14:00", "26 Jun 18:00",
];

export default function App() {
  return (
    <Page>
      <GlobalStyle />
      <TopStrip />
      <Workspace>
        <Plot>
          <Chart />
          <ChartHeader>
            <span>▾&nbsp; EURUSDb,M15&nbsp; 1.06805 1.06823 1.06778 1.06802</span>
            <Expert>
              Scalper_AvtomatFX.com V07.004_t_fix
              <svg width="12" height="12" viewBox="0 0 12 12" fill="none" stroke="#000">
                <circle cx="6" cy="6" r="5" />
                <path d="M4 3.5v2M8 3.5v2M3 7q3 4 6 0" />
              </svg>
            </Expert>
          </ChartHeader>
          <RatioBox>
            <RatioRow $color="#7fff00">
              <RatioName>BULLS</RatioName>
              <RatioBar $color="#7fff00" $width={46} />
              <RatioValue>47 %</RatioValue>
            </RatioRow>
            <RatioRow $color="#ff4500">
              <RatioName>BEARS</RatioName>
              <RatioBar $color="#ff4500" $width={52} />
              <RatioValue>53 %</RatioValue>
            </RatioRow>
            <RatioCaption>Body Ratio PERIOD_M15</RatioCaption>
          </RatioBox>
          <Side>
            <PanelRow>
              <SideTabs>
                <Button $w={19} $h={33}>&lt;</Button>
                <Button $w={19} $h={33} $tone="sky">&lt;</Button>
              </SideTabs>
              <ExpertPanel />
            </PanelRow>
            <Watermark>AvtomatFX.com</Watermark>
            <Profit>
              4755.96 $
              <Broken>broken DEM= 7</Broken>
              <Lasso viewBox="0 0 102 36" fill="none" stroke="#f00" strokeWidth="3" strokeLinecap="round">
                <path d="M99 4L30 3L6 8Q2 10 4 17L2 22L1 30L38 31L90 25L99 19L99 13L93 5" />
              </Lasso>
            </Profit>
          </Side>
          <ZoneNotes />
          <Levels />
        </Plot>
        <PriceAxis>
          {prices.map((p) => <Price key={p}>{p}</Price>)}
          <PriceNow>1.06802</PriceNow>
        </PriceAxis>
      </Workspace>
      <TimeAxis>
        {times.map((t) => <Time key={t}>{t}</Time>)}
        <TimeNow>2024.06.26 18:00</TimeNow>
      </TimeAxis>
      <TabBar>
        <Tab href="#gbpusd" $w={95} $rule>GBPUSD,M15</Tab>
        <Tab href="#eurusd" $w={88}>EURUSD,M15</Tab>
        <Tab href="#eurusdb" $w={98} $active>EURUSDb,M15</Tab>
        <Tab href="#gbpusdb" $w={98} $rule>GBPUSDb,M15</Tab>
        <Scroll width="26" height="9" viewBox="0 0 26 9" fill="#606060">
          <path d="M5 1v7l-4 -4zM19 1v7l4 -4z" />
        </Scroll>
      </TabBar>
    </Page>
  );
}
